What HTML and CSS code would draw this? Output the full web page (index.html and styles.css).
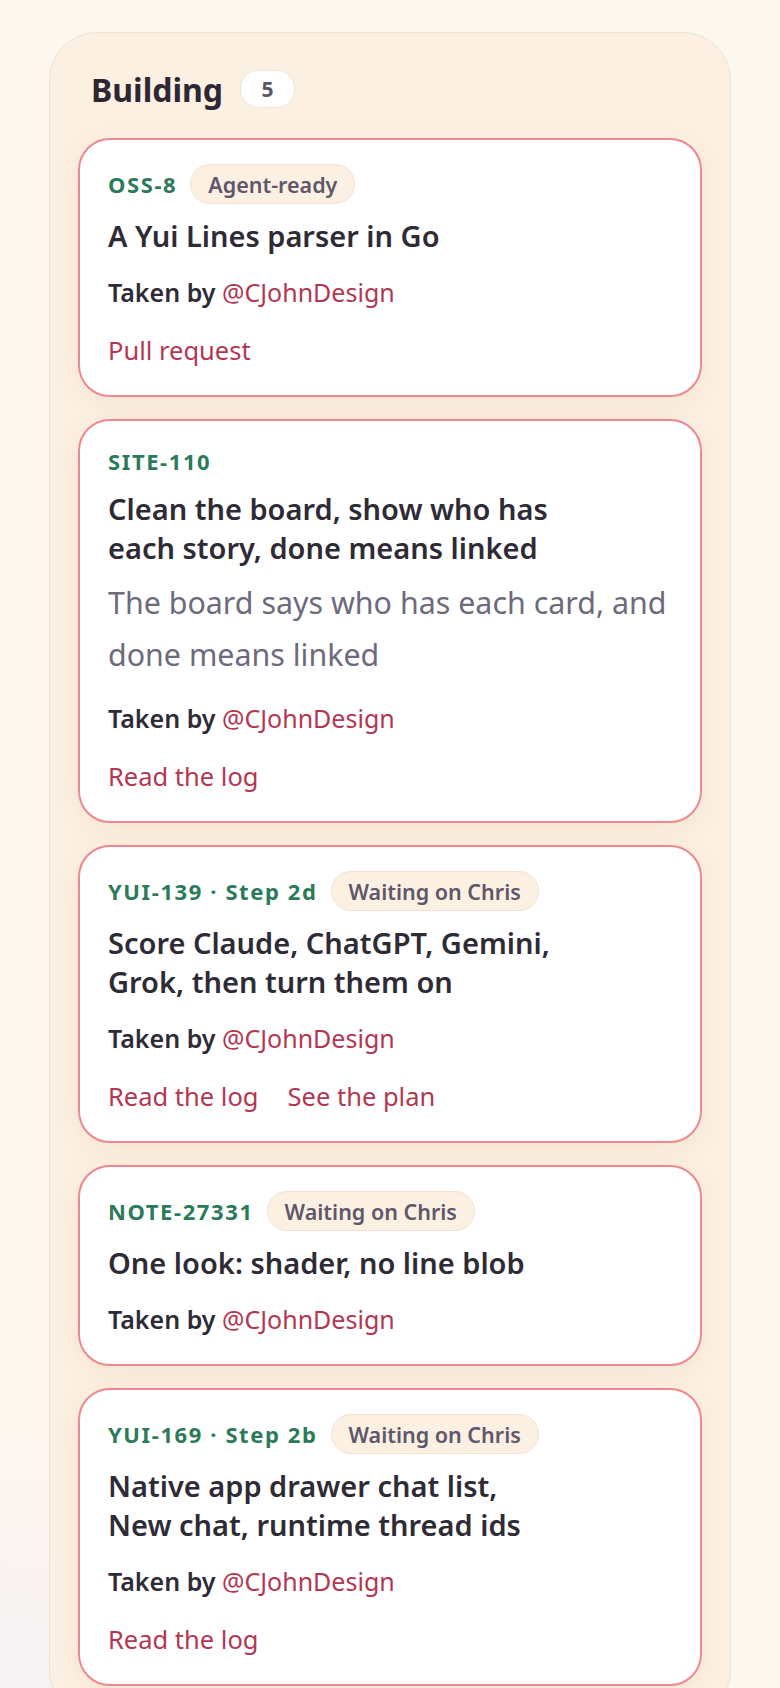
FILE: index.html
```html
<!DOCTYPE html>
<html lang="en">
<head>
    <meta charset="UTF-8">
    <meta name="viewport" content="width=device-width, initial-scale=1.0">
    <title>Board - Building</title>
    <link rel="stylesheet" href="styles.css">
</head>
<body>

    <section class="column">
        <header class="column-head">
            <h2>Building</h2>
            <span class="count">5</span>
        </header>

        <div class="cards">
            <article class="card">
                <div class="card-top">
                    <span class="card-id">OSS-8</span>
                    <span class="tag">Agent-ready</span>
                </div>
                <h3 class="card-title">A Yui Lines parser in Go</h3>
                <p class="owner">Taken by <a href="#">@CJohnDesign</a></p>
                <div class="links">
                    <a href="#">Pull request</a>
                </div>
            </article>

            <article class="card">
                <div class="card-top">
                    <span class="card-id">SITE-110</span>
                </div>
                <h3 class="card-title">Clean the board, show who has each story, done means linked</h3>
                <p class="summary">The board says who has each card, and done means linked</p>
                <p class="owner">Taken by <a href="#">@CJohnDesign</a></p>
                <div class="links">
                    <a href="#">Read the log</a>
                </div>
            </article>

            <article class="card">
                <div class="card-top">
                    <span class="card-id">YUI-139 · Step 2d</span>
                    <span class="tag">Waiting on Chris</span>
                </div>
                <h3 class="card-title">Score Claude, ChatGPT, Gemini, Grok, then turn them on</h3>
                <p class="owner">Taken by <a href="#">@CJohnDesign</a></p>
                <div class="links">
                    <a href="#">Read the log</a>
                    <a href="#">See the plan</a>
                </div>
            </article>

            <article class="card">
                <div class="card-top">
                    <span class="card-id">NOTE-27331</span>
                    <span class="tag">Waiting on Chris</span>
                </div>
                <h3 class="card-title">One look: shader, no line blob</h3>
                <p class="owner">Taken by <a href="#">@CJohnDesign</a></p>
            </article>

            <article class="card">
                <div class="card-top">
                    <span class="card-id">YUI-169 · Step 2b</span>
                    <span class="tag">Waiting on Chris</span>
                </div>
                <h3 class="card-title">Native app drawer chat list, New chat, runtime thread ids</h3>
                <p class="owner">Taken by <a href="#">@CJohnDesign</a></p>
                <div class="links">
                    <a href="#">Read the log</a>
                </div>
            </article>
        </div>
    </section>

</body>
</html>
```

FILE: styles.css
```css
body {
    font-family: "Noto Sans", "DejaVu Sans", sans-serif;
    background-color: #fdf8ee;
    background-image: radial-gradient(circle at 0 100%, #f5f0f6 0, rgba(245, 240, 246, 0) 360px);
    background-repeat: no-repeat;
    min-height: 1688px;
    margin: 0;
    padding: 32px 49px;
    color: #2f2b36;
}
a {
    color: #b33752;
    text-decoration: none;
}

/* Colonne du tableau */
.column {
    background-color: #fcf0e3;
    border: 1px solid #f0e2d2;
    border-radius: 48px;
    padding: 36px 28px 32px;
}
.column-head {
    display: flex;
    align-items: center;
    gap: 17px;
    height: 40px;
    padding-left: 13px;
    margin-bottom: 29px;
}
.column-head h2 {
    margin: 0;
    font-size: 32px;
    font-weight: 700;
    color: #2e2733;
}
.count {
    display: flex;
    align-items: center;
    justify-content: center;
    width: 53px;
    height: 36px;
    background: #fff;
    border: 1px solid #f0e4d6;
    border-radius: 18px;
    font-size: 21px;
    font-weight: 700;
    color: #5a5566;
}

.cards {
    display: flex;
    flex-direction: column;
    gap: 22px;
}
.card {
    background: #fff;
    border: 2px solid #ee8890;
    border-radius: 32px;
    padding: 24px 28px 29px;
    box-shadow: 0 6px 24px rgba(214, 160, 110, 0.16);
}
.card-top {
    display: flex;
    align-items: center;
    gap: 13px;
    min-height: 32px;
}
.card-id {
    font-size: 22px;
    font-weight: 700;
    letter-spacing: 1.6px;
    color: #2b7a5a;
}
.tag {
    display: flex;
    align-items: center;
    height: 40px;
    box-sizing: border-box;
    padding: 0 17px;
    background: #fcf0e3;
    border: 1.5px solid #f2e2cf;
    border-radius: 20px;
    font-size: 21.5px;
    font-weight: 600;
    color: #5f576b;
}
.card-title {
    margin: 12px 0 0;
    font-size: 29px;
    line-height: 39px;
    font-weight: 600;
    text-wrap: balance;
}
.summary {
    margin: 10px 0 0;
    font-size: 30.4px;
    line-height: 52px;
    color: #6d6a7c;
}
.owner {
    margin: 21px 0 0;
    font-size: 25px;
    line-height: 32px;
    font-weight: 600;
}
.owner a {
    font-weight: 400;
}
.links {
    display: flex;
    gap: 29px;
    margin-top: 26px;
    font-size: 25.5px;
    line-height: 32px;
}
```
